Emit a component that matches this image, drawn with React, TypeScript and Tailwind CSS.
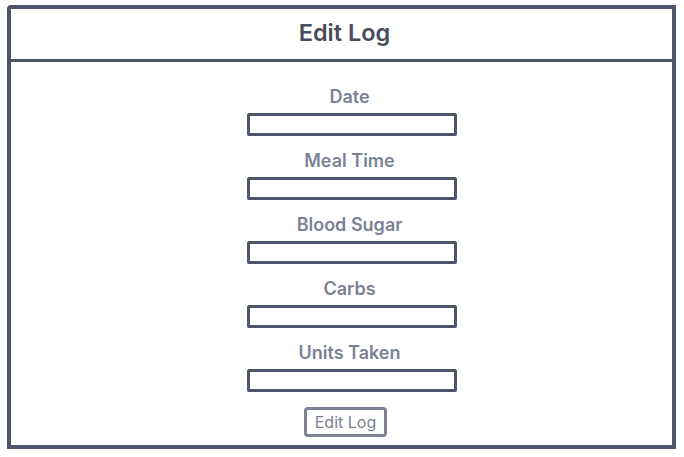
import React from "react";

const fields = ["Date", "Meal Time", "Blood Sugar", "Carbs", "Units Taken"];

export default function App() {
  return (
    <div
      className="w-[684px] h-[457px] bg-white pl-[7px] pt-[5px] pr-[8px] pb-[8px]"
      style={{ fontFamily: "Inter, 'Noto Sans', sans-serif" }}
    >
      <div className="w-full h-full border-[4px] border-[#4f5568] rounded-tl-[4px] flex flex-col">
        <div className="h-[53px] shrink-0 border-b-[3px] border-[#4f5568] flex items-center justify-center pb-[3px]">
          <h1 className="text-[23.5px] font-semibold text-[#474c5a] leading-none pl-[6px]">Edit Log</h1>
        </div>
        <div className="flex-1 flex flex-col items-center pt-[25px] pl-[16px]">
          {fields.map((f) => (
            <div key={f} className="flex flex-col items-center mb-[15px]">
              <label className="text-[18px] leading-[20px] font-semibold text-[#7c8293] h-[20px]">{f}</label>
              <div className="mt-[6px] w-[210px] h-[23px] border-[3px] border-[#4f5568] rounded-[2px] ml-[4px]" />
            </div>
          ))}
          <button className="mt-[0px] mr-[8px] w-[83px] h-[30px] border-[3px] border-[#7c8293] rounded-[4px] text-[16px] text-[#7c8293] leading-none flex items-center justify-center">
            Edit Log
          </button>
        </div>
      </div>
    </div>
  );
}
